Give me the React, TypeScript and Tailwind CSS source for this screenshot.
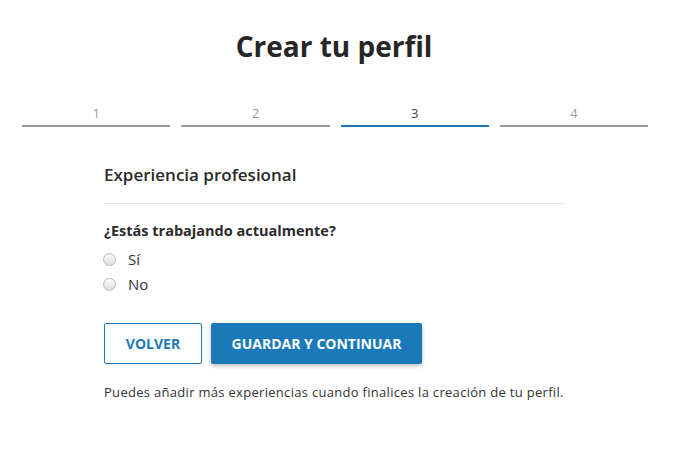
const steps = ["1", "2", "3", "4"];

const Radio = ({ label }: { label: string }) => (
  <label className="flex items-center gap-[12px] h-[25px] cursor-pointer">
    <span className="ml-[-1px] w-[13px] h-[13px] rounded-full border border-[#b9b9b9] bg-gradient-to-b from-[#fbfbfb] to-[#dedede]" />
    <span className="text-[15px] text-[#333]">{label}</span>
  </label>
);

export default function App() {
  return (
    <div
      className="w-[668px] bg-white min-h-[451px] text-[#2b2b2b]"
      style={{ fontFamily: "'Open Sans', Arial, sans-serif" }}
    >
      {/* title */}
      <h1 className="pt-[26px] text-center text-[28px] font-bold leading-[40px] text-[#262626]">
        Crear tu perfil
      </h1>

      {/* stepper */}
      <div className="mt-[38px] ml-[22px] w-[626px] flex gap-[11px]">
        {steps.map((s) => {
          const active = s === "3";
          return (
            <div key={s} className="flex-1 flex flex-col items-center">
              <span
                className={
                  active
                    ? "text-[13px] leading-[18px] text-[#444]"
                    : "text-[13px] leading-[18px] text-[#9a9a9a]"
                }
              >
                {s}
              </span>
              <div
                className={
                  active
                    ? "mt-[3px] w-full h-[2px] bg-[#1a7ab9]"
                    : "mt-[3px] w-full h-[2px] bg-[#999]"
                }
              />
            </div>
          );
        })}
      </div>

      {/* form */}
      <div className="ml-[104px] w-[461px]">
        <h2 className="mt-[36px] text-[17px] font-semibold leading-[24px] text-[#2b2b2b]">
          Experiencia profesional
        </h2>
        <div className="mt-[16px] h-px bg-[#e2e2e2]" />

        <p className="mt-[16px] text-[14.5px] font-bold leading-[22px] text-[#2b2b2b]">
          ¿Estás trabajando actualmente?
        </p>
        <div className="mt-[5px] flex flex-col">
          <Radio label="Sí" />
          <Radio label="No" />
        </div>

        <div className="mt-[26px] flex gap-[9px]">
          <button className="w-[98px] h-[41px] rounded-[2px] border border-[#1a7ab9] bg-white text-[14px] font-bold text-[#1a7ab9]">
            VOLVER
          </button>
          <button className="w-[211px] h-[41px] rounded-[2px] bg-[#1a7ab9] text-[14px] font-bold text-white shadow-[0_2px_4px_rgba(0,0,0,0.25)]">
            GUARDAR Y CONTINUAR
          </button>
        </div>

        <p className="mt-[19px] text-[13px] leading-[18px] tracking-[0.3px] text-[#333]">
          Puedes añadir más experiencias cuando finalices la creación de tu perfil.
        </p>
      </div>
    </div>
  );
}
